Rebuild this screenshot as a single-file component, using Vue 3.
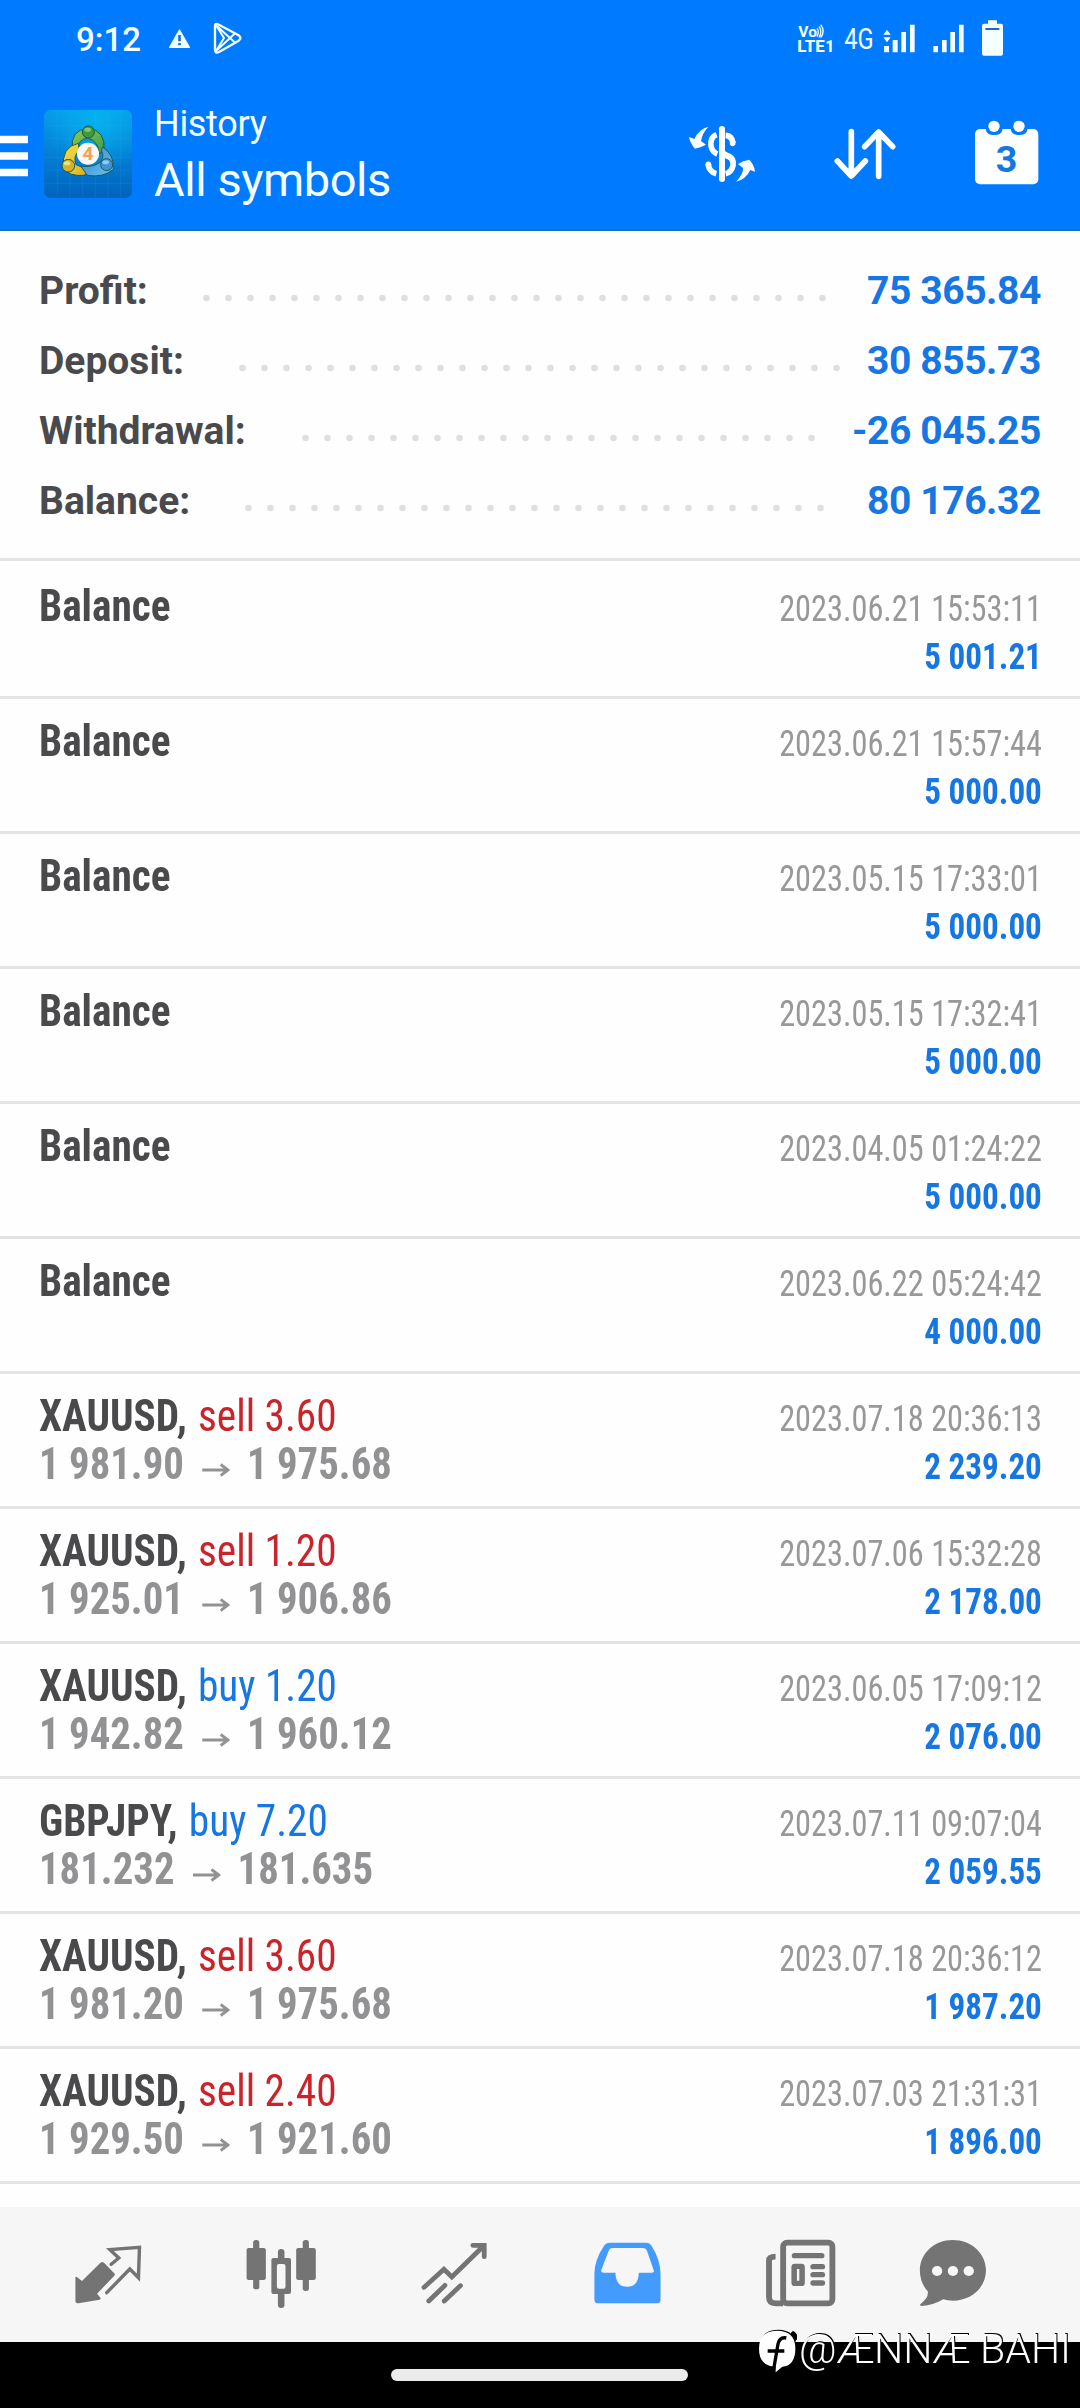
<script setup>
const summary = [
  { label: 'Profit:', value: '75 365.84', start: 203, dots: 29 },
  { label: 'Deposit:', value: '30 855.73', start: 239, dots: 28 },
  { label: 'Withdrawal:', value: '-26 045.25', start: 302, dots: 24 },
  { label: 'Balance:', value: '80 176.32', start: 245, dots: 27 },
]

const deals = [
  { name: 'Balance', time: '2023.06.21 15:53:11', profit: '5 001.21' },
  { name: 'Balance', time: '2023.06.21 15:57:44', profit: '5 000.00' },
  { name: 'Balance', time: '2023.05.15 17:33:01', profit: '5 000.00' },
  { name: 'Balance', time: '2023.05.15 17:32:41', profit: '5 000.00' },
  { name: 'Balance', time: '2023.04.05 01:24:22', profit: '5 000.00' },
  { name: 'Balance', time: '2023.06.22 05:24:42', profit: '4 000.00' },
  { name: 'XAUUSD,', side: 'sell', volume: '3.60', open: '1 981.90', close: '1 975.68', time: '2023.07.18 20:36:13', profit: '2 239.20' },
  { name: 'XAUUSD,', side: 'sell', volume: '1.20', open: '1 925.01', close: '1 906.86', time: '2023.07.06 15:32:28', profit: '2 178.00' },
  { name: 'XAUUSD,', side: 'buy', volume: '1.20', open: '1 942.82', close: '1 960.12', time: '2023.06.05 17:09:12', profit: '2 076.00' },
  { name: 'GBPJPY,', side: 'buy', volume: '7.20', open: '181.232', close: '181.635', time: '2023.07.11 09:07:04', profit: '2 059.55' },
  { name: 'XAUUSD,', side: 'sell', volume: '3.60', open: '1 981.20', close: '1 975.68', time: '2023.07.18 20:36:12', profit: '1 987.20' },
  { name: 'XAUUSD,', side: 'sell', volume: '2.40', open: '1 929.50', close: '1 921.60', time: '2023.07.03 21:31:31', profit: '1 896.00' },
]
</script>

<template>
  <div class="screen">
    <header class="header">
      <div class="status">
        <span class="clock">9:12</span>
        <svg class="status-left" viewBox="501 60 231 108" width="77" height="36">
          <path d="M538.500 90L568 142H509Z" fill="#f4ffff" stroke="#f4ffff" stroke-width="4" stroke-linejoin="round" />
          <path d="M538.500 105V124M538.500 129V136" stroke="#1670d8" stroke-width="8" />
          <g fill="none" stroke="#f4ffff" stroke-width="7" stroke-linejoin="round" stroke-linecap="round">
            <path d="M645 78Q645 69 654 73L716 106Q727 114 716 122L657 156Q645 161 645 150Z" />
            <path d="M648 76L704 127M648 153L704 101M648 76L672 114L648 153" stroke-width="6" />
          </g>
        </svg>
        <svg class="status-right" viewBox="411 54 621 117" width="207" height="39">
          <g fill="#f4ffff">
            <text x="415" y="112" font-size="45" font-weight="700" textLength="56" lengthAdjust="spacingAndGlyphs">Vo</text>
            <text x="412" y="157" font-size="49" font-weight="800" textLength="82" lengthAdjust="spacingAndGlyphs">LTE</text>
            <text x="496" y="157" font-size="47" font-weight="800">1</text>
            <text x="553" y="147" font-size="90" textLength="88" lengthAdjust="spacingAndGlyphs">4G</text>
            <path d="M670 104L681 89L692 104ZM670 112H692L681 127ZM672 138H687V157H672ZM698 120H713V157H698ZM724 96H738V157H724ZM750 74H764V157H750Z" />
            <path d="M820 138H834V157H820ZM846 120H860V157H846ZM871 96H885V157H871ZM897 74H911V157H897Z" />
            <path d="M984 61H1011V71H1023Q1029 71 1029 77V161Q1029 167 1023 167H972Q966 167 966 161V77Q966 71 972 71H984Z" />
          </g>
          <path d="M976 87H1018" stroke="#2a62c8" stroke-width="6" />
          <path d="M471 85Q479 95 471 110M477 79Q488 95 477 112M482 74Q497 94 482 113" fill="none" stroke="#f4ffff" stroke-width="4" />
        </svg>
      </div>
      <div class="appbar">
        <svg class="menu" viewBox="0 0 28 42" width="28" height="42">
          <path d="M0 4.500H28M0 21H28M0 37.500H28" stroke="#fff" stroke-width="7.500" />
        </svg>
        <svg class="logo" viewBox="132 330 264 264" width="88" height="88">
          <defs>
            <linearGradient id="sky" x1="0" y1="0" x2="0" y2="1"><stop offset="0" stop-color="#079bea" /><stop offset="1" stop-color="#0063bd" /></linearGradient>
            <radialGradient id="glow" cx=".6" cy=".12" r=".6"><stop offset="0" stop-color="#04b8f2" stop-opacity=".8" /><stop offset="1" stop-color="#04b8f2" stop-opacity="0" /></radialGradient>
            <linearGradient id="green" x1="0" y1="0" x2="1" y2="1"><stop offset="0" stop-color="#8ccb57" /><stop offset="1" stop-color="#3f9a45" /></linearGradient>
            <linearGradient id="gold" x1="0" y1="0" x2="1" y2="1"><stop offset="0" stop-color="#f4df43" /><stop offset="1" stop-color="#d8b02a" /></linearGradient>
            <linearGradient id="azure" x1="0" y1="0" x2="1" y2="1"><stop offset="0" stop-color="#2c82cb" /><stop offset="1" stop-color="#6cc4f4" /></linearGradient>
          </defs>
          <rect x="132" y="330" width="264" height="264" rx="20" fill="url(#sky)" />
          <rect x="132" y="330" width="264" height="264" rx="20" fill="url(#glow)" />
          <path d="M172 332V592M210 332V592M248 332V592M286 332V592M324 332V592M362 332V592M134 378H394M134 416H394M134 472H394M134 510H394M134 550H394" stroke="#46b6f0" stroke-opacity=".22" stroke-width="2" />
          <g stroke="#1d5a50" stroke-width="3">
            <path d="M217 448Q210 390 264 385Q318 390 312 452L298 462Q296 424 264 414Q234 420 237 438Z" fill="url(#green)" />
            <path d="M235 430Q184 440 190 505Q208 530 252 526L264 516Q246 498 228 494Q218 470 238 450Z" fill="url(#gold)" />
            <path d="M308 440Q344 466 340 508Q310 534 262 526L242 498Q276 504 302 486Q314 468 304 452Z" fill="url(#azure)" />
            <circle cx="265" cy="396" r="18" fill="#3e9a3c" />
            <circle cx="205" cy="497" r="19" fill="#d5b22b" />
            <circle cx="320" cy="494" r="18" fill="#3f93d2" />
          </g>
          <ellipse cx="263" cy="389" rx="10" ry="6" fill="#a3dc88" opacity=".7" />
          <ellipse cx="201" cy="490" rx="10" ry="6" fill="#fff3a0" opacity=".7" />
          <ellipse cx="317" cy="487" rx="10" ry="6" fill="#b5e3ff" opacity=".7" />
          <circle cx="264" cy="461" r="33" fill="#fbf8f3" />
          <text x="264" y="481" text-anchor="middle" font-size="57" font-weight="700" fill="#f3a05a">4</text>
        </svg>
        <div class="titles">
          <div class="page">History</div>
          <div class="filter">All symbols</div>
        </div>
        <div class="actions">
          <svg viewBox="84 360 204 198" width="68" height="66">
            <g fill="#fff">
              <path d="M145 380Q126 401 123 423L138 434Q121 443 105 446Q91 431 87 411L103 417Q116 388 145 380Z" />
              <path d="M228 545Q251 522 249 504L234 492Q249 482 268 479Q283 494 285 515L271 510Q258 538 228 545Z" />
            </g>
            <g fill="none" stroke="#fff" stroke-linecap="round">
              <path d="M186 387V537" stroke-width="18" />
              <path d="M197 406Q216 407 219 429M170 404Q150 411 153 438Q157 456 172 462M197 467Q222 470 219 497Q214 518 197 521M145 493Q147 516 169 521" stroke-width="17" stroke-linecap="butt" />
              <path d="M218 428V430M145 493V496" stroke-width="17" />
              <path d="M190 460L207 470" stroke-width="17" />
            </g>
          </svg>
          <svg viewBox="519 360 192 198" width="64" height="66">
            <path d="M574 395V526M532 483L574 528L616 483M656 529V398M614 440L656 396L698 440" fill="none" stroke="#fff" stroke-width="17" stroke-linecap="round" stroke-linejoin="round" />
          </svg>
          <svg viewBox="942 360 195 198" width="65" height="66">
            <rect x="945" y="387" width="190" height="166" rx="15" fill="#fff" />
            <path d="M978 386H1027V390Q1025 405 1002 405Q980 405 978 390ZM1053 386H1102V390Q1100 405 1077 405Q1055 405 1053 390Z" fill="#007aff" />
            <circle cx="1002" cy="379" r="17" fill="#fff" />
            <circle cx="1077" cy="379" r="17" fill="#fff" />
            <text x="1040" y="517" text-anchor="middle" font-size="113" font-weight="700" fill="#1478e4">3</text>
          </svg>
        </div>
      </div>
    </header>

    <section class="summary">
      <div v-for="s in summary" :key="s.label" class="sum-row">
        <span class="sum-label" :style="{ width: s.start - 39 + 'px' }">{{ s.label }}</span>
        <svg class="leader" :width="s.dots * 22" height="8">
          <line x1="3.500" y1="4" :x2="s.dots * 22 - 15" y2="4" stroke="#dfdfdf" stroke-width="6.600" stroke-linecap="round" stroke-dasharray="0 22" />
        </svg>
        <span class="sum-value">{{ s.value }}</span>
      </div>
    </section>

    <main class="deals">
      <article v-for="(d, i) in deals" :key="i" class="deal">
        <div class="left">
          <div class="title"><b>{{ d.name }}</b><span v-if="d.side" class="side" :class="d.side">{{ d.side }} {{ d.volume }}</span></div>
          <div v-if="d.side" class="prices">
            <span>{{ d.open }}</span>
            <svg class="arrow" viewBox="0 0 30 14" width="30" height="14"><path d="M0 7H27M20 1.500L28 7L20 12.500" fill="none" stroke="#929294" stroke-width="2.900" /></svg>
            <span>{{ d.close }}</span>
          </div>
        </div>
        <div class="right">
          <div class="time">{{ d.time }}</div>
          <div class="profit">{{ d.profit }}</div>
        </div>
      </article>
    </main>

    <nav class="tabs">
      <svg viewBox="197.450 195 232.300 225" preserveAspectRatio="none" width="80" height="75">
        <path d="M296 276Q299 276 302 278L333 311Q334 314 332 317L282 371L292 384Q293 388 289 389L228 400Q219 400 219 393V321Q222 319 226 323L238 333L291 279Z" fill="#747474" />
        <path d="M323 283L345 264L319 239L405 232L402 323L377 297L310 368" fill="none" stroke="#747474" stroke-width="10" stroke-linecap="round" />
      </svg>
      <svg viewBox="699.800 195 232.300 225" preserveAspectRatio="none" width="80" height="75">
        <g fill="#747474">
          <rect x="735" y="210" width="18" height="148" rx="8" />
          <rect x="716" y="234" width="56" height="96" rx="6" />
          <rect x="879" y="210" width="18" height="153" rx="8" />
          <rect x="860" y="234" width="57" height="96" rx="6" />
          <rect x="807" y="237" width="19" height="177" rx="9" />
          <rect x="788" y="264" width="57" height="108" rx="6" />
        </g>
        <rect x="804" y="282" width="25" height="74" rx="6" fill="#f6f6f6" />
      </svg>
      <svg viewBox="1202.100 195 232.300 225" preserveAspectRatio="none" width="80" height="75">
        <path d="M1231 352L1289 298L1312 321L1404 228M1373 226H1406V260M1245 393L1292 346M1290 393L1337 347" fill="none" stroke="#747474" stroke-width="14" stroke-linecap="round" stroke-linejoin="miter" />
      </svg>
      <svg viewBox="136.500 195 232.300 225" preserveAspectRatio="none" width="80" height="75">
        <path fill-rule="evenodd" d="M201 218H310Q318 218 323 226Q350 270 350 312V389Q350 400 339 400H169Q158 400 158 389V312Q158 270 187 226Q192 218 201 218ZM210 234Q203 234 200 241L178 300Q176 308 185 308H219Q220 350 253 350Q286 350 287 308H325Q333 308 330 300L310 241Q307 234 299 234Z" fill="#429bfd" />
      </svg>
      <svg viewBox="638.800 195 232.300 225" preserveAspectRatio="none" width="80" height="75">
        <g fill="none" stroke="#747474">
          <path d="M706 400H684Q665 400 665 381V272Q665 260 684 260" stroke-width="17" />
          <rect x="706" y="218" width="143" height="182" rx="12" stroke-width="17" />
          <path d="M739 257H818M793 290H820M793 314H820M793 339H820" stroke-width="16" stroke-linecap="round" />
          <rect x="738" y="289" width="23" height="51" rx="2" stroke-width="16" />
        </g>
      </svg>
      <svg viewBox="1083.100 195 232.300 225" preserveAspectRatio="none" width="80" height="75">
        <path d="M1198 210C1252 210 1295 250 1295 301C1295 352 1253 392 1199 392Q1183 392 1171 388Q1142 406 1108 408Q1100 407 1106 401Q1129 384 1126 364Q1103 338 1103 301C1103 250 1146 210 1198 210Z" fill="#747474" />
        <g fill="#f6f6f6"><circle cx="1153" cy="303" r="15" /><circle cx="1199" cy="303" r="15" /><circle cx="1245" cy="303" r="15" /></g>
      </svg>
    </nav>

    <footer class="system"><div class="pill"></div></footer>

    <div class="credit">
      <svg viewBox="26 24 111 129" width="37" height="43">
        <path d="M80 26Q135 26 135 80Q135 130 96 134L76 151L76 134Q26 133 26 80Q26 26 80 26Z" fill="#fff" />
        <path d="M108 48Q88 44 83 66L70 142M52 87H102M122 34Q134 40 138 56" fill="none" stroke="#000" stroke-width="10" />
      </svg>
      <svg class="credit-name" width="278" height="56" viewBox="0 -4 278 56">
        <text x="0" y="33" font-size="40" fill="#fff" textLength="272" lengthAdjust="spacingAndGlyphs">@ÆNNÆ BAHI</text>
      </svg>
    </div>
  </div>
</template>

<style>
body { margin: 0; background: #fff; }
</style>

<style scoped>
.screen { position: relative; width: 1080px; height: 2408px; overflow: hidden; display: flex; flex-direction: column; background: #fefefe; font-family: Roboto, "Noto Sans", sans-serif; box-sizing: border-box; }
svg { display: block; flex: none; }
.header { height: 231px; box-sizing: border-box; background: #007aff; border-bottom: 2px solid #1c6fbe; color: #f4ffff; flex: none; }
.status { display: flex; height: 78px; align-items: flex-start; padding: 0 76px 0 76px; }
.clock { width: 91px; font-size: 33px; font-weight: 500; line-height: 39px; margin-top: 20px; }
.status-left { margin-top: 20px; }
.status-right { margin-top: 18px; margin-left: 553px; }
.appbar { display: flex; align-items: flex-start; height: 151px; padding-right: 41px; }
.menu { margin-top: 57px; }
.logo { margin: 32px 0 0 16px; }
.titles { margin-left: 22px; padding-top: 25px; }
.page { font-size: 36px; line-height: 42px; letter-spacing: -0.3px; }
.filter { font-size: 47px; line-height: 56px; margin-top: 7px; letter-spacing: -0.45px; }
.actions { display: flex; gap: 77px; margin: 42px 0 0 auto; }
.summary { flex: none; height: 302px; border-bottom: 3px solid #e4e4e4; padding: 25px 39px 0 39px; box-sizing: content-box; }
.sum-row { display: flex; height: 70px; align-items: flex-start; font-size: 39px; font-weight: 700; line-height: 70px; white-space: nowrap; }
.sum-label { color: #4a4a4d; flex: none; }
.leader { margin-top: 38px; }
.sum-value { margin-left: auto; color: #1677e2; letter-spacing: -0.4px; }
.deals { flex: none; padding-top: 3px; height: 1643px; box-sizing: border-box; }
.deal { display: flex; justify-content: space-between; height: 135px; box-sizing: border-box; border-bottom: 3px solid #e4e4e4; padding: 17px 38px 0 39px; font-stretch: 75%; white-space: nowrap; }
.title { font-size: 44px; line-height: 50px; height: 50px; color: #4a4a4d; transform: scaleX(0.938); transform-origin: left; }
.title b { font-weight: 730; }
.side { margin-left: 12px; font-weight: 440; }
.sell { color: #c8242a; }
.buy { color: #1677e2; }
.prices { display: flex; font-size: 44px; font-weight: 730; line-height: 46px; color: #929294; transform: scaleX(0.927); transform-origin: left; }
.arrow { margin: 22px 18px 0 20px; }
.right { text-align: right; }
.time { font-size: 36px; line-height: 56px; font-weight: 430; color: #98989a; transform: scaleX(0.897); transform-origin: right; }
.profit { font-size: 36px; line-height: 40px; font-weight: 730; color: #1677e2; transform: scaleX(0.92); transform-origin: right; }
.tabs { flex: none; display: grid; grid-template-columns: 173px 173px 173px 173px 153px 80px; height: 135px; padding: 28px 0 0 68px; box-sizing: border-box; background: #f6f6f6; margin-top: 3px; }
.system { flex: none; height: 66px; background: #000; padding-top: 27px; box-sizing: border-box; }
.pill { width: 297px; height: 12px; border-radius: 6px; background: #ebebeb; margin-left: 391px; }
.credit { position: absolute; left: 759px; top: 2330px; display: flex; gap: 3px; filter: drop-shadow(1px -1px 0 #000); font-weight: 300; }
.credit-name { margin-top: -4px; overflow: visible; }
</style>
